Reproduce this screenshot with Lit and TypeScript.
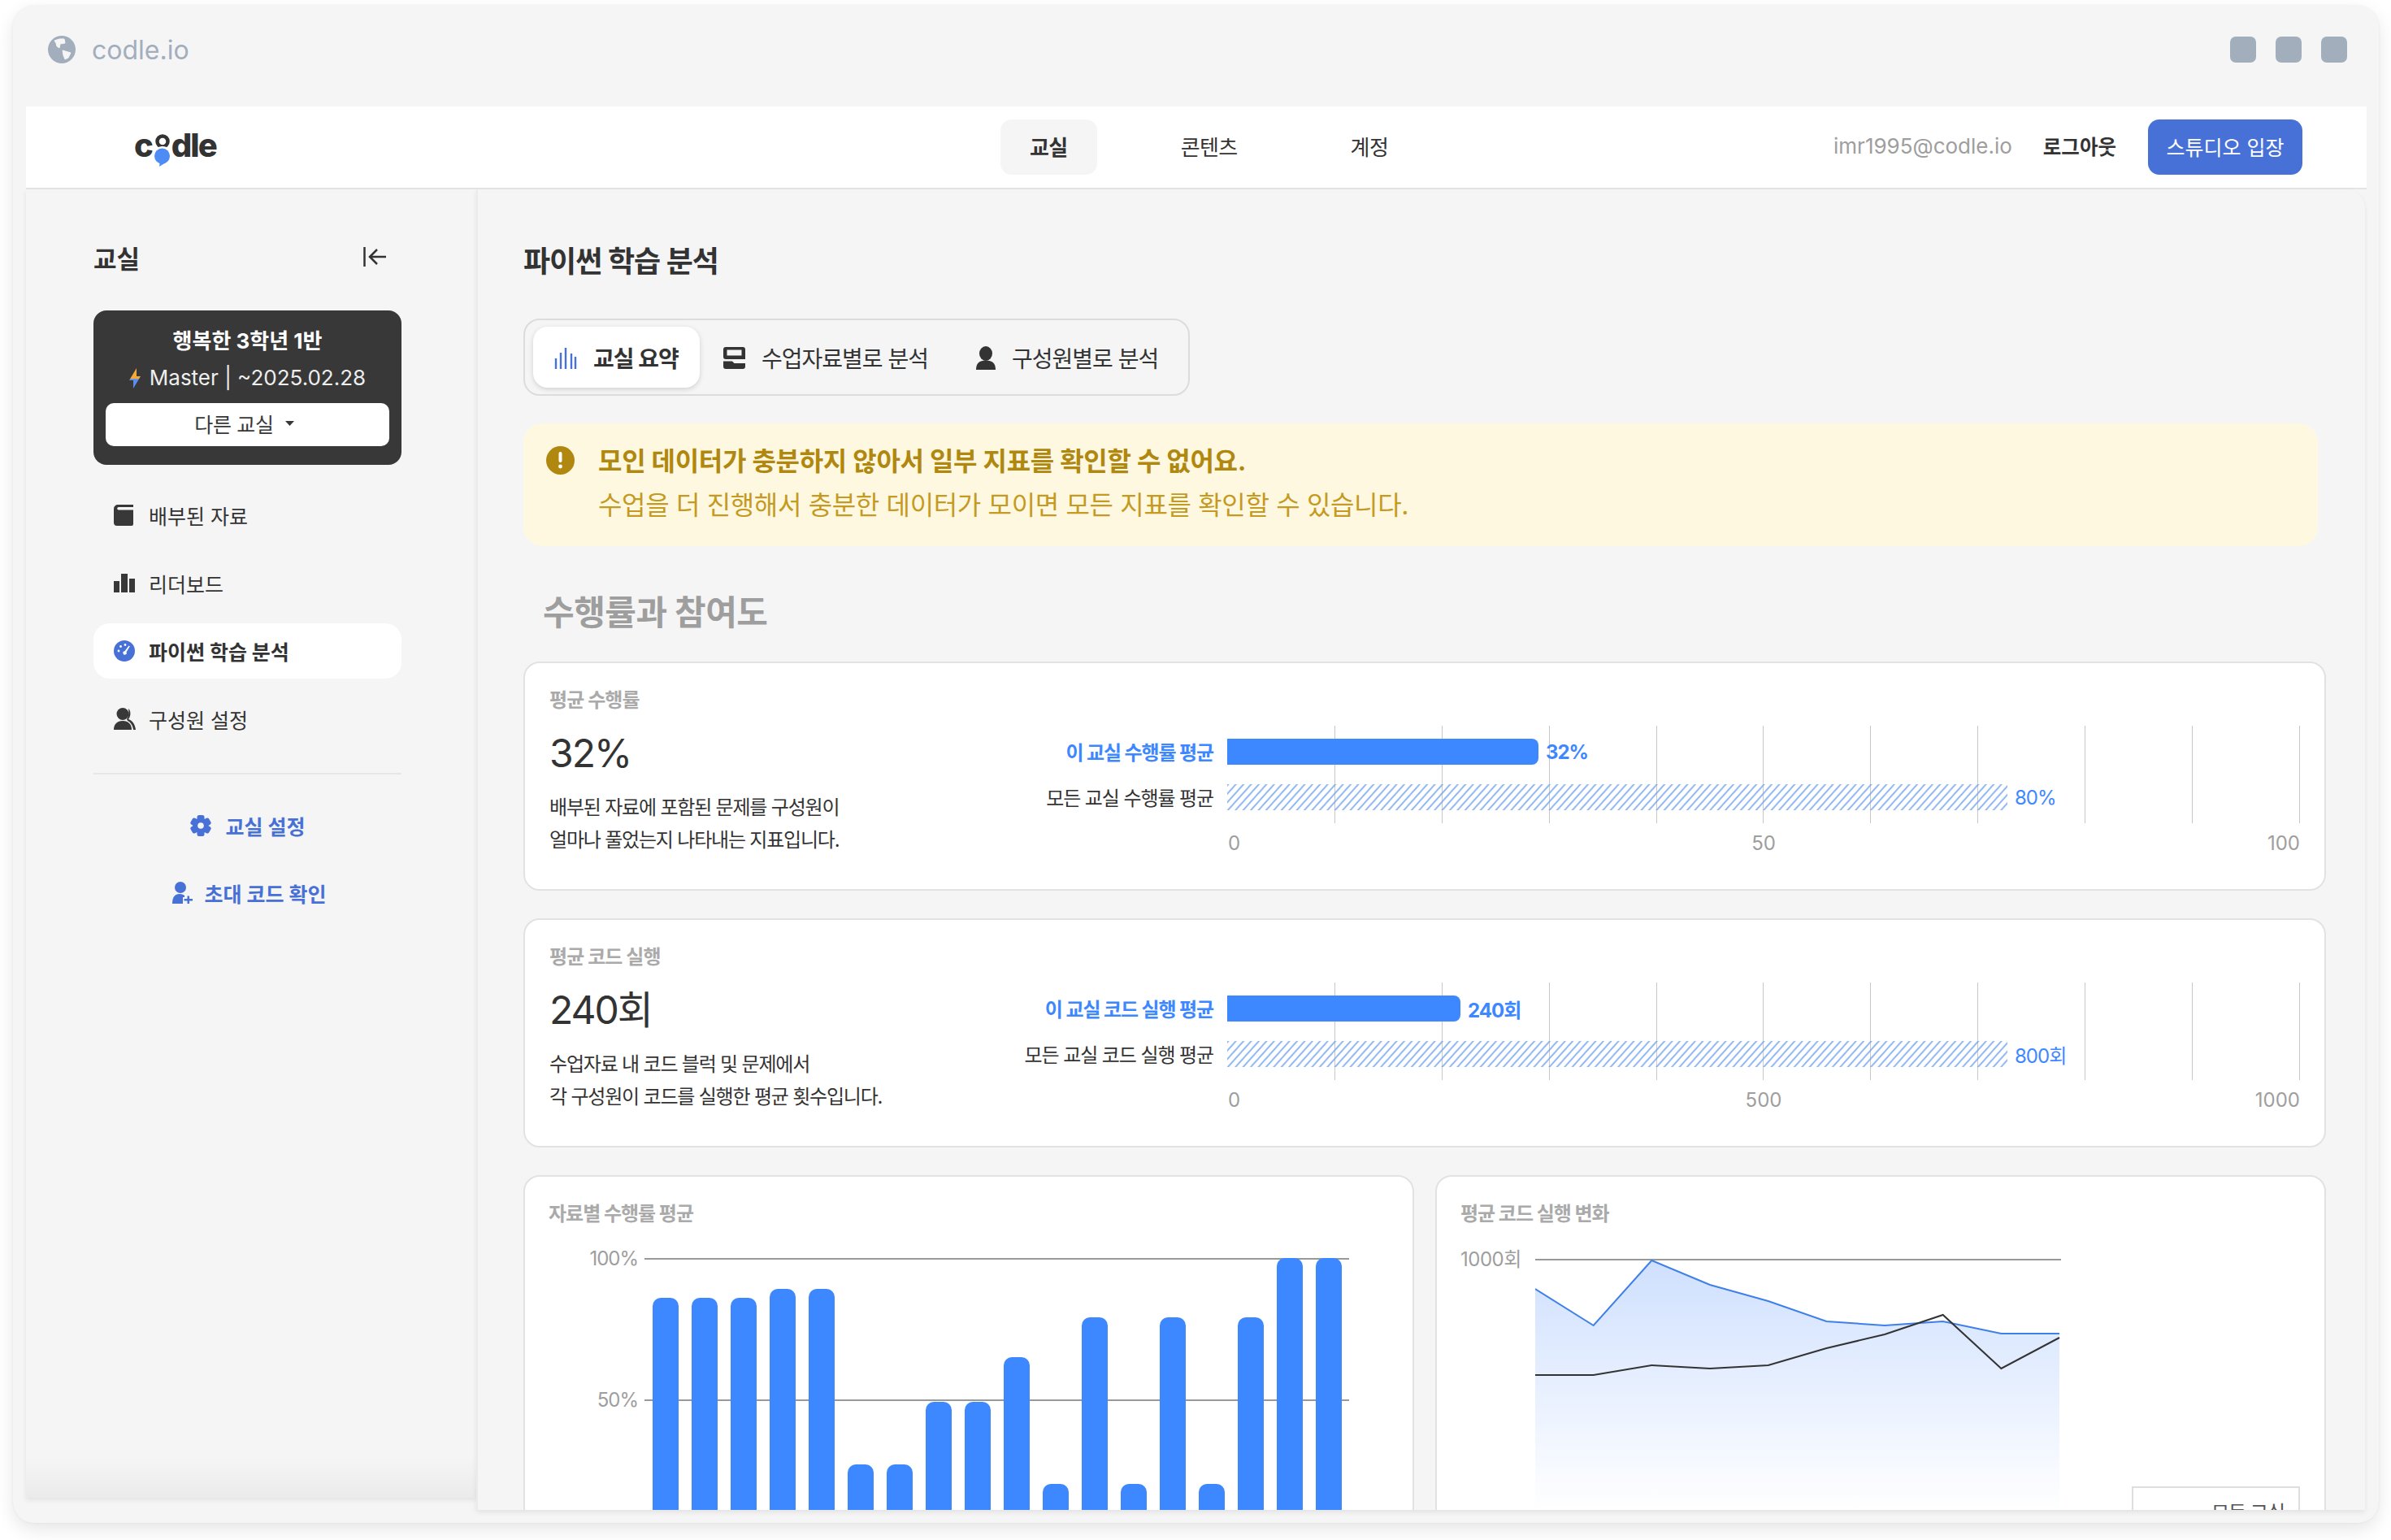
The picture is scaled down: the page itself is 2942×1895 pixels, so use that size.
import {LitElement, html, css, svg} from 'lit';
import {customElement, property} from 'lit/decorators.js';

const FONT = css`Inter, "Noto Sans CJK KR", sans-serif`;

const barData = [86, 86, 86, 89, 89, 27, 27, 49, 49, 65, 20, 79, 20, 79, 20, 79, 100, 100];
const blueLine = [1587, 1632, 1552, 1582, 1602, 1627, 1632, 1627, 1642, 1642];
const darkLine = [1693, 1693, 1681, 1685, 1681, 1660, 1643, 1619, 1685, 1647];

// line chart svg starts at y=1540 of the page, points are 71.67 apart
const pts = (ys: number[]) =>
  ys.map((y, i) => `${(i * 71.67).toFixed(1)},${y - 1540}`).join(' ');

const icons = {
  globe: svg`<svg width="34" height="34" viewBox="0 0 34 34"><circle cx="17" cy="17" r="17" fill="#a3aebd"/><g fill="#f5f5f5" stroke="#f5f5f5" stroke-width="1" stroke-linejoin="round"><path d="M8 6q6-3 12-2l1 5-6 1-1 5-3-2-1-4z"/><path d="M18 18l10 3-3 6-4 2-2-5z"/></g></svg>`,
  book: svg`<svg width="24" height="26" viewBox="0 0 24 26" fill="#383838"><path d="M5 0h19v3H6a1.800 1.800 0 0 0 0 3.600h18V24a2 2 0 0 1-2 2H4a4 4 0 0 1-4-4V5a5 5 0 0 1 5-5z"/></svg>`,
  bars: svg`<svg width="26" height="23" viewBox="0 0 26 23" fill="#383838"><rect y="9" width="7" height="14"/><rect x="9" width="8" height="23"/><rect x="19" y="6" width="7" height="17"/></svg>`,
  gauge: svg`<svg width="26" height="26" viewBox="0 0 26 26"><circle cx="13" cy="13" r="13" fill="#4771d6"/><g fill="#fff"><circle cx="6" cy="13" r="1.400"/><circle cx="8.500" cy="7.500" r="1.400"/><circle cx="14" cy="5.500" r="1.400"/><path d="M18.500 6.500l1.300.8-4.300 7.200a2.200 2.200 0 1 1-2-1.200z"/></g></svg>`,
  users: svg`<svg width="27" height="27" viewBox="0 0 27 27" fill="#383838"><circle cx="11" cy="7.500" r="7.500"/><path d="M0 27c0-7 4-11 11-11s11 4 11 11z"/><path d="M18 1c3 2 3.500 9 0 13 5 1.500 8 6 9 13h-3c-.5-5-3-9-7-11l-1-2c2-3 3-8 2-13z"/></svg>`,
  gear: svg`<svg width="26" height="26" viewBox="-13 -13 26 26" fill="#4771d6"><circle r="9.500"/>${[0, 60, 120, 180, 240, 300].map(a => svg`<rect x="-4.500" y="-13" width="9" height="8" rx="2.500" transform="rotate(${a})"/>`)}<circle r="3.800" fill="#f5f5f5"/></svg>`,
  invite: svg`<svg class="invite" width="25" height="27" viewBox="0 0 25 27" fill="#4771d6"><circle cx="10" cy="7" r="7"/><path d="M0 27c0-8 3-12 9-12 3 0 5 1 6 2v2h-2v8z"/><path d="M18.500 17.500h2.500v3.500h4v2.500h-4V27h-2.500v-3.500h-4V21h4z"/></svg>`,
  back: svg`<svg width="28" height="24" viewBox="0 0 28 24" fill="none" stroke="#333" stroke-width="2.500"><path d="M1.500 0v24M28 12H9M17 3l-9 9 9 9"/></svg>`,
  bolt: svg`<svg width="14" height="25" viewBox="0 0 14 25"><defs><linearGradient id="bolt" x1="0" y1="0" x2="0" y2="1"><stop offset=".5" stop-color="#f0a93a"/><stop offset=".55" stop-color="#5b8def"/></linearGradient></defs><path d="M9 0v10h5L5 25v-10H0z" fill="url(#bolt)"/></svg>`,
  caret: svg`<svg width="11" height="6" viewBox="0 0 11 6" fill="#383838"><path d="M0 0h11L5.500 6z"/></svg>`,
  tabBars: svg`<svg width="28" height="26" viewBox="0 0 28 26" stroke="#4771d6" stroke-width="2.400"><path d="M2 26V13M8 26V6M14 26V0M21 26V7M26 26V11"/></svg>`,
  tabDoc: svg`<svg width="27" height="27" viewBox="0 0 27 27" fill="#333"><path d="M3 0h21a3 3 0 0 1 3 3v12H3a3 3 0 0 1-3-3V3a3 3 0 0 1 3-3zm1.500 3.500v7h18v-7z" fill-rule="evenodd"/><path d="M0 17.500h11l2.500 2.500H27v4a3 3 0 0 1-3 3H3a3 3 0 0 1-3-3z"/></svg>`,
  tabUser: svg`<svg width="24" height="29" viewBox="0 0 24 29" fill="#333"><ellipse cx="12" cy="9" rx="8" ry="9"/><path d="M0 29c0-8 4-11.500 12-11.500S24 21 24 29z"/></svg>`,
  warn: svg`<svg width="35" height="35" viewBox="0 0 35 35"><circle cx="17.500" cy="17.500" r="17.500" fill="#b0880f"/><rect x="15.500" y="7" width="4" height="13" rx="2" fill="#fff"/><circle cx="17.500" cy="25" r="2.400" fill="#fff"/></svg>`,
};

@customElement('metric-card')
export class MetricCard extends LitElement {
  @property() label = '';
  @property() value = '';
  @property() line1 = '';
  @property() line2 = '';
  @property() mine = '';
  @property() all = '';
  @property() mineValue = '';
  @property() allValue = '';
  @property({type: Number}) mineWidth = 0;
  @property({type: Number}) allWidth = 0;
  @property() mid = '';
  @property() max = '';

  static styles = css`
    :host {
      display: block;
      box-sizing: border-box;
      height: 282px;
      padding: 29px 30px 0 30px;
      background: #fff;
      border: 2px solid #e2e2e2;
      border-radius: 20px;
      font-family: ${FONT};
    }
    .label { font-size: 24px; line-height: 34px; font-weight: 700; color: #aaa; letter-spacing: -0.9px; }
    .body { display: flex; margin-top: 14px; }
    .left { width: 560px; flex: none; }
    .value { padding-top: 2px; font-size: 48px; line-height: 64px; color: #333; letter-spacing: -2px; }
    .desc { margin-top: 15px; font-size: 24px; line-height: 40px; color: #333; letter-spacing: -1.2px; }
    .chart { flex: 1; position: relative; }
    .lines {
      position: absolute;
      top: 0;
      right: 0;
      width: 1320px;
      height: 120px;
      display: flex;
      justify-content: space-between;
    }
    .lines i { width: 1px; background: #c8c8c8; }
    .lines i:first-child { background: none; }
    .rows { position: relative; display: flex; flex-direction: column; gap: 24px; padding: 16px 0; }
    .row { display: flex; height: 32px; align-items: center; }
    .name {
      flex: 1;
      margin-right: 17px;
      padding-bottom: 2px;
      text-align: right;
      font-size: 24px;
      color: #333;
      letter-spacing: -1.1px;
      white-space: nowrap;
    }
    .name.mine { color: #3d87ff; font-weight: 700; }
    .track { width: 1320px; height: 32px; display: flex; align-items: center; gap: 9px; }
    .bar { height: 32px; background: #3d87ff; border-radius: 0 8px 8px 0; }
    .hatch { display: block; flex: none; }
    .num { font-size: 24px; color: #3d87ff; white-space: nowrap; letter-spacing: -1px; }
    .num.mine { font-weight: 700; }
    .axis {
      display: grid;
      grid-template-columns: 1fr auto 1fr;
      width: 1320px;
      margin: 8px 0 0 auto;
      font-size: 24px;
      line-height: 34px;
      color: #9e9e9e;
    }
    .axis span:first-child { padding-left: 1px; }
    .axis span:last-child { text-align: right; }
  `;

  protected render() {
    return html`
      <div class="label">${this.label}</div>
      <div class="body">
        <div class="left">
          <div class="value">${this.value}</div>
          <div class="desc">${this.line1}<br />${this.line2}</div>
        </div>
        <div class="chart">
          <div class="lines">${Array.from({length: 11}, () => html`<i></i>`)}</div>
          <div class="rows">
            <div class="row">
              <div class="name mine">${this.mine}</div>
              <div class="track">
                <div class="bar" style="width:${this.mineWidth}px"></div>
                <span class="num mine">${this.mineValue}</span>
              </div>
            </div>
            <div class="row">
              <div class="name">${this.all}</div>
              <div class="track">
                <svg class="hatch" width=${this.allWidth} height="32">
                  <defs>
                    <pattern id="stripes" width="7" height="7" patternUnits="userSpaceOnUse" patternTransform="rotate(42)">
                      <line x1="1" y1="0" x2="1" y2="7" stroke="#6ea2f0" stroke-width="1.500" />
                    </pattern>
                  </defs>
                  <rect width="100%" height="32" fill="url(#stripes)" />
                </svg>
                <span class="num">${this.allValue}</span>
              </div>
            </div>
          </div>
          <div class="axis"><span>0</span><span>${this.mid}</span><span>${this.max}</span></div>
        </div>
      </div>
    `;
  }
}

@customElement('app-root')
export class AppRoot extends LitElement {
  static styles = css`
    :host {
      display: block;
      width: 2942px;
      height: 1895px;
      overflow: hidden;
      background: #fff;
      font-family: ${FONT};
      color: #333;
    }
    .frame {
      box-sizing: border-box;
      width: 2911px;
      height: 1867px;
      margin: 7px 0 0 16px;
      padding: 0 15px 0 16px;
      background: #f5f5f5;
      border-radius: 26px;
      box-shadow: 0 8px 22px rgba(0, 0, 0, 0.1), 0 0 3px rgba(0, 0, 0, 0.06);
    }
    .titlebar { box-sizing: border-box; height: 124px; display: flex; align-items: center; padding: 0 24px 16px 27px; }
    .titlebar .url { margin-left: 20px; font-size: 32px; color: #a3aebd; }
    .dots { margin-left: auto; display: flex; gap: 24px; }
    .dots i { width: 32px; height: 32px; border-radius: 7px; background: #a3aebd; }

    header {
      box-sizing: border-box;
      height: 102px;
      display: flex;
      align-items: center;
      padding: 0 79px 0 133px;
      background: #fff;
      border-bottom: 2px solid #e4e4e4;
    }
    .logo {
      width: 100px;
      height: 50px;
      margin-top: 5px;
      display: flex;
      align-items: flex-start;
      font-size: 40px;
      font-weight: 800;
      line-height: 40px;
      color: #333;
      letter-spacing: -2px;
    }
    .logo svg { margin: 6px 0 0 2px; flex: none; }
    nav { display: flex; gap: 67px; margin-left: 966px; }
    nav a {
      box-sizing: border-box;
      height: 68px;
      padding: 0 36px 3px;
      display: flex;
      align-items: center;
      border-radius: 14px;
      font-size: 26px;
      letter-spacing: -0.6px;
    }
    nav a.on { background: #f5f5f5; font-weight: 700; }
    .account { margin-left: auto; display: flex; align-items: center; }
    .email { font-size: 26px; color: #9e9e9e; margin: 0 38px 3px 0; }
    .logout { font-size: 24.500px; font-weight: 700; margin: 0 39px 3px 0; }
    .studio {
      box-sizing: border-box;
      height: 68px;
      width: 190px;
      padding-bottom: 3px;
      display: flex;
      align-items: center;
      justify-content: center;
      border-radius: 14px;
      background: #4771d6;
      color: #fff;
      font-size: 25px;
    }

    .columns { display: flex; align-items: flex-start; }
    aside {
      box-sizing: border-box;
      width: 554px;
      height: 1610px;
      flex: none;
      padding: 66px 92px 0 83px;
      background: linear-gradient(#f5f5f5 calc(100% - 50px), #ebebeb);
      box-shadow: 0 3px 6px rgba(0, 0, 0, 0.08);
    }
    .side-head { display: flex; align-items: center; justify-content: space-between; height: 34px; padding-right: 19px; }
    .side-head b { font-size: 31px; font-weight: 700; }
    .room {
      box-sizing: border-box;
      height: 190px;
      margin-top: 49px;
      padding: 20px 15px 0;
      display: flex;
      flex-direction: column;
      align-items: center;
      background: #383838;
      border-radius: 16px;
      color: #fff;
    }
    .room b { font-size: 26px; line-height: 36px; }
    .plan { display: flex; align-items: center; gap: 11px; margin-top: 9px; font-size: 26px; line-height: 36px; color: #eee; }
    .other {
      box-sizing: border-box;
      width: 100%;
      height: 53px;
      margin-top: 13px;
      padding: 0 8px 3px 0;
      display: flex;
      align-items: center;
      justify-content: center;
      gap: 14px;
      background: #fff;
      border-radius: 10px;
      color: #383838;
      font-size: 25px;
      letter-spacing: -0.3px;
    }
    .menu { display: flex; flex-direction: column; gap: 15.500px; margin-top: 28px; }
    .menu a {
      height: 68px;
      padding-left: 25px;
      display: flex;
      align-items: center;
      border-radius: 20px;
      font-size: 25px;
    }
    .menu a.on { background: #fff; font-weight: 700; }
    .menu .ico { width: 43px; flex: none; display: flex; }
    hr { border: 0; border-top: 2px solid #e6e6e6; margin: 32px 0 0; }
    .links { display: flex; flex-direction: column; gap: 15px; margin-top: 29px; }
    .links a {
      height: 68px;
      display: flex;
      align-items: center;
      justify-content: center;
      gap: 18px;
      color: #4771d6;
      font-size: 25px;
      font-weight: 700;
    }
    .links a:last-child { padding-left: 4px; }
    .links .invite { margin-right: -3px; }

    main {
      box-sizing: border-box;
      width: 2324px;
      height: 1625px;
      flex: none;
      overflow: hidden;
      padding: 64px 48px 0 56px;
      background: #f5f5f5;
      border-left: 2px solid #ebebeb;
      border-radius: 0 24px 0 0;
      box-shadow: 0 3px 6px rgba(0, 0, 0, 0.08);
    }
    h1 { margin: 0; font-size: 36px; line-height: 50px; font-weight: 700; letter-spacing: -1px; }
    .tabs {
      box-sizing: border-box;
      width: 820px;
      height: 95px;
      margin-top: 45px;
      padding: 8px 10px;
      display: flex;
      background: #f5f5f5;
      border: 2px solid #dcdcdc;
      border-radius: 20px;
    }
    .tabs a { display: flex; align-items: center; font-size: 28px; height: 75px; letter-spacing: -1px; }
    .tabs a svg { margin: 2px 20px 0 0; }
    .tabs a.on {
      width: 205px;
      box-sizing: border-box;
      padding-left: 26px;
      margin-right: 29px;
      background: #fff;
      border-radius: 18px;
      font-weight: 700;
      box-shadow: 0 2px 6px rgba(0, 0, 0, 0.15);
    }
    .tabs a.mid { margin-right: 59px; }
    .alert {
      box-sizing: border-box;
      height: 151px;
      margin-top: 34px;
      padding: 24px 0 0 28px;
      display: flex;
      gap: 29px;
      width: 2208px;
      background: #fff8e1;
      border-radius: 24px;
    }
    .alert svg { margin-top: 4px; flex: none; }
    .alert b { display: block; font-size: 32px; line-height: 46px; color: #b0880f; letter-spacing: -0.3px; }
    .alert span { display: block; margin-top: 8px; font-size: 32px; line-height: 46px; color: #c49a22; letter-spacing: -0.35px; }
    h2 { margin: 52px 0 0 24px; font-size: 42px; line-height: 60px; font-weight: 700; color: #9e9e9e; letter-spacing: -0.5px; }
    .stack { display: flex; flex-direction: column; gap: 34px; margin-top: 30px; }
    .pair { display: grid; grid-template-columns: 1096px 1096px; gap: 26px; }
    .panel {
      box-sizing: border-box;
      height: 560px;
      padding: 29px 29px 0 29px;
      background: #fff;
      border: 2px solid #e2e2e2;
      border-radius: 20px;
    }
    .panel .label { font-size: 24px; line-height: 34px; font-weight: 700; color: #aaa; letter-spacing: -1px; }
    .plot { position: relative; height: 400px; margin: 37px 0 0 118px; }
    .tick { position: absolute; left: 0; right: 49px; height: 2px; background: #999; }
    .tick span {
      position: absolute;
      right: calc(100% + 8px);
      top: -16px;
      font-size: 24px;
      line-height: 34px;
      color: #9e9e9e;
      white-space: nowrap;
      letter-spacing: -1px;
    }
    .cols { position: absolute; top: 0; left: 10px; display: flex; align-items: flex-end; gap: 16px; height: 348px; }
    .cols i { width: 32px; background: #3d87ff; border-radius: 10px 10px 0 0; }
    .trend { display: flex; margin-top: 28px; }
    .trend .y { width: 92px; margin-top: -6px; flex: none; font-size: 24px; line-height: 34px; color: #9e9e9e; letter-spacing: -0.5px; }
    .trend svg { flex: none; }
    .legend {
      box-sizing: border-box;
      width: 207px;
      height: 100px;
      margin: 290px 0 0 87px;
      padding: 14px 17px 0 0;
      border: 2px solid #dedede;
      text-align: right;
      font-size: 24px;
      line-height: 34px;
      color: #555;
      flex: none;
      letter-spacing: -1px;
    }
  `;

  protected render() {
    const menu = [
      [icons.book, '배부된 자료', false],
      [icons.bars, '리더보드', false],
      [icons.gauge, '파이썬 학습 분석', true],
      [icons.users, '구성원 설정', false],
    ] as const;
    return html`
      <div class="frame">
        <div class="titlebar">
          ${icons.globe}
          <span class="url">codle.io</span>
          <div class="dots"><i></i><i></i><i></i></div>
        </div>
        <header>
          <div class="logo">
            <span>c</span>
            <svg width="22" height="40" viewBox="0 0 22 40">
              <circle cx="11" cy="9" r="6.500" fill="none" stroke="#333" stroke-width="4.500" />
              <circle cx="11" cy="26" r="11" fill="#fff" />
              <path d="M8 33l-1 7 8-5z" fill="#4d8bf5" />
              <circle cx="10.500" cy="27" r="9.500" fill="#4d8bf5" />
            </svg>
            <span>dle</span>
          </div>
          <nav>
            <a class="on">교실</a>
            <a>콘텐츠</a>
            <a>계정</a>
          </nav>
          <div class="account">
            <span class="email">imr1995@codle.io</span>
            <span class="logout">로그아웃</span>
            <a class="studio">스튜디오 입장</a>
          </div>
        </header>
        <div class="columns">
          <aside>
            <div class="side-head"><b>교실</b>${icons.back}</div>
            <div class="room">
              <b>행복한 3학년 1반</b>
              <div class="plan">${icons.bolt}<span>Master | ~2025.02.28</span></div>
              <div class="other"><span>다른 교실</span>${icons.caret}</div>
            </div>
            <div class="menu">
              ${menu.map(
                ([icon, text, on]) => html`
                  <a class=${on ? 'on' : ''}><span class="ico">${icon}</span>${text}</a>
                `
              )}
            </div>
            <hr />
            <div class="links">
              <a>${icons.gear}교실 설정</a>
              <a>${icons.invite}초대 코드 확인</a>
            </div>
          </aside>
          <main>
            <h1>파이썬 학습 분석</h1>
            <div class="tabs">
              <a class="on">${icons.tabBars}교실 요약</a>
              <a class="mid">${icons.tabDoc}수업자료별로 분석</a>
              <a>${icons.tabUser}구성원별로 분석</a>
            </div>
            <div class="alert">
              ${icons.warn}
              <div>
                <b>모인 데이터가 충분하지 않아서 일부 지표를 확인할 수 없어요.</b>
                <span>수업을 더 진행해서 충분한 데이터가 모이면 모든 지표를 확인할 수 있습니다.</span>
              </div>
            </div>
            <h2>수행률과 참여도</h2>
            <div class="stack">
              <metric-card
                label="평균 수행률"
                value="32%"
                line1="배부된 자료에 포함된 문제를 구성원이"
                line2="얼마나 풀었는지 나타내는 지표입니다."
                mine="이 교실 수행률 평균"
                all="모든 교실 수행률 평균"
                mineValue="32%"
                allValue="80%"
                .mineWidth=${383}
                .allWidth=${960}
                mid="50"
                max="100"
              ></metric-card>
              <metric-card
                label="평균 코드 실행"
                value="240회"
                line1="수업자료 내 코드 블럭 및 문제에서"
                line2="각 구성원이 코드를 실행한 평균 횟수입니다."
                mine="이 교실 코드 실행 평균"
                all="모든 교실 코드 실행 평균"
                mineValue="240회"
                allValue="800회"
                .mineWidth=${287}
                .allWidth=${960}
                mid="500"
                max="1000"
              ></metric-card>
              <div class="pair">
                <div class="panel">
                  <div class="label">자료별 수행률 평균</div>
                  <div class="plot">
                    <div class="tick" style="top:0"><span>100%</span></div>
                    <div class="tick" style="top:174px"><span>50%</span></div>
                    <div class="cols">
                      ${barData.map(v => html`<i style="height:${v * 3.48}px"></i>`)}
                    </div>
                  </div>
                </div>
                <div class="panel">
                  <div class="label">평균 코드 실행 변화</div>
                  <div class="trend">
                    <div class="y">1000회</div>
                    <svg width="647" height="320" viewBox="0 0 647 320">
                      <defs>
                        <linearGradient id="area" x1="0" y1="0" x2="0" y2="1">
                          <stop offset="0" stop-color="#cfe0fe" />
                          <stop offset="1" stop-color="#ffffff" />
                        </linearGradient>
                      </defs>
                      <rect x="0" y="10" width="647" height="2" fill="#999" />
                      <polygon points="0,320 ${pts(blueLine)} 645,320" fill="url(#area)" />
                      <polyline points=${pts(blueLine)} fill="none" stroke="#3f80e8" stroke-width="2" />
                      <polyline points=${pts(darkLine)} fill="none" stroke="#333" stroke-width="2" />
                    </svg>
                    <div class="legend">모든 교실</div>
                  </div>
                </div>
              </div>
            </div>
          </main>
        </div>
      </div>
    `;
  }
}
